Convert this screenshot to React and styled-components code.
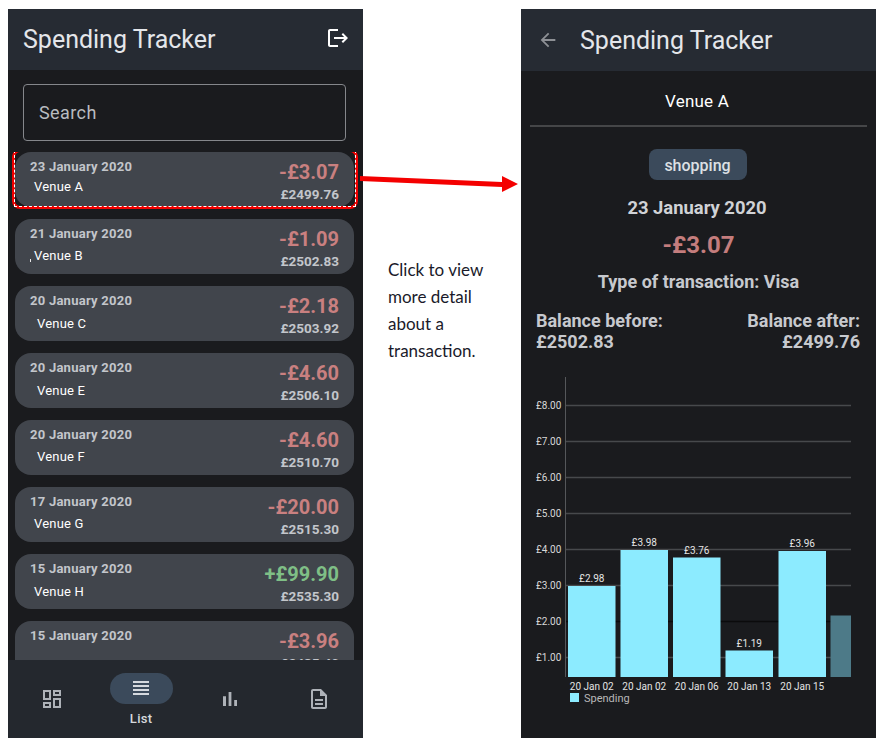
import React from "react";
import styled, { createGlobalStyle } from "styled-components";

const transactions = [
  { date: "23 January 2020", venue: "Venue A", amount: "-£3.07", balance: "£2499.76", indent: 4, gap: 4, selected: true },
  { date: "21 January 2020", venue: "Venue B", amount: "-£1.09", balance: "£2502.83", indent: 4, gap: 6, stray: true },
  { date: "20 January 2020", venue: "Venue C", amount: "-£2.18", balance: "£2503.92", indent: 7, gap: 7 },
  { date: "20 January 2020", venue: "Venue E", amount: "-£4.60", balance: "£2506.10", indent: 7, gap: 7 },
  { date: "20 January 2020", venue: "Venue F", amount: "-£4.60", balance: "£2510.70", indent: 7, gap: 6 },
  { date: "17 January 2020", venue: "Venue G", amount: "-£20.00", balance: "£2515.30", indent: 4, gap: 6 },
  { date: "15 January 2020", venue: "Venue H", amount: "+£99.90", balance: "£2535.30", indent: 4, gap: 7 },
  { date: "15 January 2020", venue: "", amount: "-£3.96", balance: "£2435.40", indent: 4, gap: 6 },
];

const bars = [
  { x: 47, w: 47.5, top: 214, label: "£2.98", tick: "20 Jan 02" },
  { x: 99.5, w: 47.5, top: 178, label: "£3.98", tick: "20 Jan 02" },
  { x: 152, w: 47.5, top: 185.5, label: "£3.76", tick: "20 Jan 06" },
  { x: 204.5, w: 47.5, top: 278.5, label: "£1.19", tick: "20 Jan 13" },
  { x: 257.5, w: 47.5, top: 179, label: "£3.96", tick: "20 Jan 15" },
];

const yTicks = [8, 7, 6, 5, 4, 3, 2, 1];

const Icon = ({ d, size = 24, color = "#fff" }) => (
  <svg width={size} height={size} viewBox="0 0 24 24" fill={color}>
    <path d={d} />
  </svg>
);

const icons = {
  logout: "M17 7l-1.41 1.41L18.17 11H8v2h10.17l-2.58 2.58L17 17l5-5zM4 5h8V3H4c-1.1 0-2 .9-2 2v14c0 1.1.9 2 2 2h8v-2H4V5z",
  back: "M20 11H7.83l5.59-5.59L12 4l-8 8 8 8 1.41-1.41L7.83 13H20v-2z",
  dashboard: "M19 5v2h-4V5h4M9 5v6H5V5h4m10 8v6h-4v-6h4M9 17v2H5v-2h4M21 3h-8v6h8V3zM11 3H3v10h8V3zm10 8h-8v10h8V11zm-10 4H3v6h8v-6z",
  list: "M4 15h16v-2H4v2zm0 4h16v-2H4v2zm0-8h16V9H4v2zm0-6v2h16V5H4z",
  chart: "M5 9.2h3V19H5zM10.6 5h2.8v14h-2.8zm5.6 8H19v6h-2.8z",
  doc: "M8 16h8v2H8zm0-4h8v2H8zm6-10H6c-1.1 0-2 .9-2 2v16c0 1.1.89 2 1.99 2H18c1.1 0 2-.9 2-2V8l-6-6zm4 18H6V4h7v5h5v11z",
};

const SpendingChart = () => (
  <ChartSvg width="355" height="345" viewBox="0 0 355 345">
    {yTicks.map((t, i) => {
      const y = 33.5 + i * 36;
      return (
        <g key={t}>
          <line x1="44" x2="330" y1={y} y2={y} stroke={t === 2 ? "#0b0b0c" : "#47494c"} strokeWidth="1.4" />
          <text x="15" y={y + 3} fontSize="10" fill="#d8d8d8">{`£${t}.00`}</text>
        </g>
      );
    })}
    <line x1="44.5" x2="44.5" y1="5" y2="305" stroke="#55575a" strokeWidth="1" />
    {bars.map((b) => (
      <g key={b.x}>
        <rect x={b.x} y={b.top} width={b.w} height={305 - b.top} fill="#8cebff" />
        <text x={b.x + b.w / 2} y={b.top - 4} fontSize="10" fill="#e4e4e4" textAnchor="middle">{b.label}</text>
        <text x={b.x + b.w / 2} y="318" fontSize="10" fill="#e4e4e4" textAnchor="middle">{b.tick}</text>
      </g>
    ))}
    <rect x="309.5" y="243.5" width="20.5" height="61.5" fill="#4d7a88" />
    <rect x="49" y="321" width="9" height="9" fill="#8cebff" />
    <text x="63" y="330" fontSize="11" fill="#b8b8b8">Spending</text>
  </ChartSvg>
);

const App = () => (
  <>
    <GlobalStyle />
    <Page>
      <Phone>
        <Header>
          <Title>Spending Tracker</Title>
          <HeaderAction>
            <Icon d={icons.logout} />
          </HeaderAction>
        </Header>
        <SearchWrap>
          <SearchBox>Search</SearchBox>
        </SearchWrap>
        <List>
          {transactions.map((t) => (
            <Card key={t.balance} $selected={t.selected}>
              <CardLeft $gap={t.gap}>
                <CardDate>{t.date}</CardDate>
                <Venue $indent={t.indent}>
                  {t.stray && <Stray />}
                  {t.venue}
                </Venue>
              </CardLeft>
              <CardRight>
                <Amount $positive={t.amount.startsWith("+")}>{t.amount}</Amount>
                <Balance>{t.balance}</Balance>
              </CardRight>
            </Card>
          ))}
        </List>
        <BottomNav>
          <NavItem>
            <Icon d={icons.dashboard} color="#aeb2b8" />
          </NavItem>
          <NavItem>
            <Pill>
              <Icon d={icons.list} color="#d5d9de" />
            </Pill>
            <NavLabel>List</NavLabel>
          </NavItem>
          <NavItem>
            <Icon d={icons.chart} color="#aeb2b8" />
          </NavItem>
          <NavItem>
            <Icon d={icons.doc} color="#aeb2b8" />
          </NavItem>
        </BottomNav>
      </Phone>

      <Note>Click to view more detail about a transaction.</Note>

      <Phone>
        <Header $tall>
          <BackButton>
            <Icon d={icons.back} size={22} color="#8d9095" />
          </BackButton>
          <Title>Spending Tracker</Title>
        </Header>
        <Detail>
          <DetailVenue>Venue A</DetailVenue>
          <Divider />
          <Chip>shopping</Chip>
          <DetailDate>23 January 2020</DetailDate>
          <DetailAmount>-£3.07</DetailAmount>
          <DetailType>Type of transaction: Visa</DetailType>
          <BalanceRow>
            <BalanceCol>
              Balance before:
              <br />
              £2502.83
            </BalanceCol>
            <BalanceCol $right>
              Balance after:
              <br />
              £2499.76
            </BalanceCol>
          </BalanceRow>
          <SpendingChart />
        </Detail>
      </Phone>

      <Arrow width="170" height="24" viewBox="0 0 170 24">
        <polygon points="2,5 144,11 144,5 160,13 144,21 144,16 2,10" fill="#f40000" />
      </Arrow>
    </Page>
  </>
);

export default App;

const GlobalStyle = createGlobalStyle`
  html, body {
    margin: 0;
    padding: 0;
    background: #fff;
  }
  body {
    font-family: Roboto, "Liberation Sans", sans-serif;
  }
`;

const Page = styled.div`
  position: relative;
  width: 887px;
  height: 748px;
  box-sizing: border-box;
  padding: 9px 0 10px 8px;
  display: flex;
  background: #fff;
  overflow: hidden;
`;

const Phone = styled.div`
  width: 355px;
  height: 729px;
  flex-shrink: 0;
  display: flex;
  flex-direction: column;
  background: #1a1b1e;
  overflow: hidden;
`;

const Header = styled.div`
  height: ${(p) => (p.$tall ? "62px" : "61px")};
  flex-shrink: 0;
  display: flex;
  align-items: center;
  padding: 0 15px;
  background: #262b33;
`;

const Title = styled.div`
  flex: 1;
  font-size: 25px;
  color: #e4e6ea;
`;

const HeaderAction = styled.div`
  display: flex;
  margin: -3px -2px 0 0;
`;

const BackButton = styled.div`
  display: flex;
  margin: 0 21px 0 1px;
`;

const SearchWrap = styled.div`
  padding: 14px 17px 11px 15px;
`;

const SearchBox = styled.div`
  height: 55px;
  display: flex;
  align-items: center;
  padding-left: 15px;
  border: 1px solid #85878b;
  border-radius: 4px;
  font-size: 18px;
  letter-spacing: 0.4px;
  color: #b9bcc0;
`;

const List = styled.div`
  flex: 1;
  min-height: 0;
  display: flex;
  flex-direction: column;
  gap: 12px;
  padding: 0 9px 0 7px;
  overflow: hidden;
`;

const Card = styled.div`
  position: relative;
  height: 55px;
  flex-shrink: 0;
  box-sizing: border-box;
  padding: 7px 15px 0;
  display: flex;
  justify-content: space-between;
  background: #41454c;
  border-radius: 16px;

  ${(p) =>
    p.$selected &&
    `
    &::after {
      content: "";
      position: absolute;
      inset: -3px -4px -2px -3px;
      border: 3px solid #f00000;
      border-radius: 8px;
    }
    &::before {
      content: "";
      position: absolute;
      inset: -2px -2px 0 -1px;
      border: 1px dashed #fff;
      z-index: 1;
    }
  `}
`;

const CardLeft = styled.div`
  display: flex;
  flex-direction: column;
  gap: ${(p) => p.$gap}px;
`;

const CardDate = styled.div`
  font-size: 13px;
  font-weight: 700;
  line-height: 16px;
  letter-spacing: 0.25px;
  color: #c3c6cb;
`;

const Venue = styled.div`
  position: relative;
  font-size: 13px;
  line-height: 16px;
  letter-spacing: 0.2px;
  color: #fff;
  padding-left: ${(p) => p.$indent}px;
`;

const Stray = styled.span`
  position: absolute;
  left: 0;
  bottom: 2px;
  width: 1px;
  height: 3px;
  background: #e8e8e8;
`;

const CardRight = styled.div`
  display: flex;
  flex-direction: column;
  align-items: flex-end;
  gap: 2px;
  padding-top: 1px;
`;

const Amount = styled.div`
  font-size: 20px;
  font-weight: 700;
  line-height: 24px;
  color: ${(p) => (p.$positive ? "#7fbf86" : "#c98080")};
`;

const Balance = styled.div`
  font-size: 13.5px;
  font-weight: 700;
  line-height: 16px;
  color: #c3c6cb;
`;

const BottomNav = styled.div`
  height: 78px;
  flex-shrink: 0;
  display: grid;
  grid-template-columns: repeat(4, 1fr);
  background: #24282e;
`;

const NavItem = styled.div`
  display: flex;
  flex-direction: column;
  align-items: center;
  justify-content: center;
`;

const Pill = styled.div`
  width: 63px;
  height: 31px;
  display: flex;
  align-items: center;
  justify-content: center;
  background: #3b4a5b;
  border-radius: 16px;
`;

const NavLabel = styled.div`
  margin-top: 7px;
  font-size: 13px;
  font-weight: 500;
  letter-spacing: 0.3px;
  color: #d5d8dc;
`;

const Note = styled.div`
  width: 158px;
  flex-shrink: 0;
  box-sizing: border-box;
  padding: 247px 30px 0 25px;
  font-family: Lato, "Liberation Sans", sans-serif;
  font-size: 17px;
  line-height: 27px;
  color: #1a1a2a;
`;

const Detail = styled.div`
  flex: 1;
  display: flex;
  flex-direction: column;
  align-items: center;
`;

const DetailVenue = styled.div`
  margin: 20px 3px 0 0;
  font-size: 17px;
  line-height: 20px;
  letter-spacing: 0.2px;
  color: #fff;
`;

const Divider = styled.div`
  align-self: stretch;
  height: 2px;
  margin: 14px 9px 0;
  background: #454648;
`;

const Chip = styled.div`
  margin: 22px 2px 0 0;
  width: 98px;
  height: 31px;
  padding-top: 2px;
  box-sizing: border-box;
  display: flex;
  align-items: center;
  justify-content: center;
  background: #3b4a5b;
  border-radius: 8px;
  font-size: 16px;
  font-weight: 500;
  color: #dde0e4;
`;

const DetailDate = styled.div`
  margin: 17px 3px 0 0;
  font-size: 18.4px;
  font-weight: 700;
  line-height: 22px;
  color: #d0d2d6;
`;

const DetailAmount = styled.div`
  margin-top: 12px;
  font-size: 24px;
  font-weight: 700;
  line-height: 28px;
  color: #c47d7d;
`;

const DetailType = styled.div`
  margin-top: 12px;
  font-size: 18px;
  font-weight: 700;
  line-height: 22px;
  color: #c7c9ce;
`;

const BalanceRow = styled.div`
  align-self: stretch;
  margin-top: 17px;
  padding: 0 16px 0 15px;
  display: flex;
  justify-content: space-between;
`;

const BalanceCol = styled.div`
  font-size: 18px;
  font-weight: 700;
  line-height: 21px;
  color: #c7c9ce;
  text-align: ${(p) => (p.$right ? "right" : "left")};
`;

const ChartSvg = styled.svg`
  display: block;
  flex-shrink: 0;
  margin-top: 20px;
  font-family: Roboto, "Liberation Sans", sans-serif;
`;

const Arrow = styled.svg`
  position: absolute;
  left: 358px;
  top: 171px;
`;
